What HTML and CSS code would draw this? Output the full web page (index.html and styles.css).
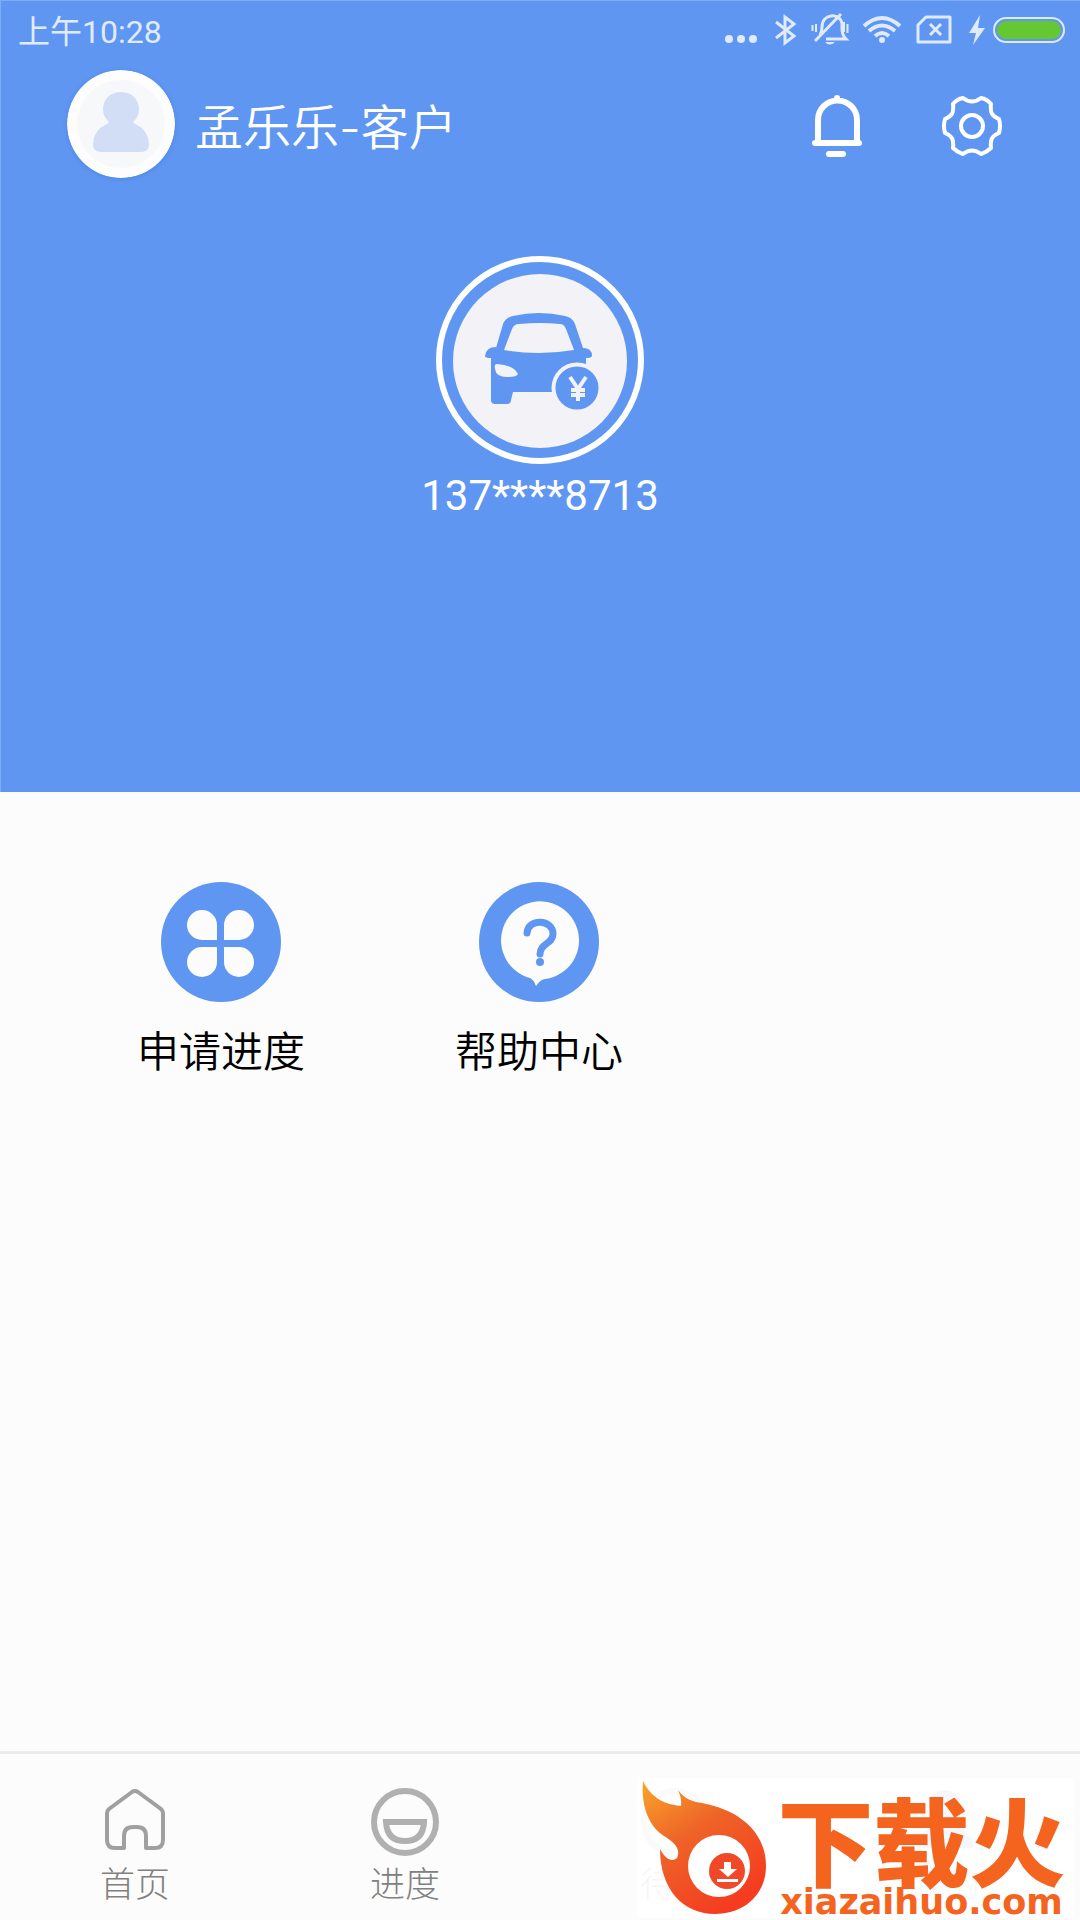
FILE: index.html
```html
<!DOCTYPE html>
<html lang="zh-CN">
<head>
<meta charset="utf-8">
<meta name="viewport" content="width=device-width, initial-scale=1">
<title>我的</title>
<link rel="stylesheet" href="styles.css">
</head>
<body>
<header class="hero">
  <div class="status">
    <span class="status-time">上午10:28</span>
    <svg class="status-icons" viewBox="0 0 350 40" width="350" height="40" aria-hidden="true">
      <g fill="#dfeafc">
        <circle cx="9" cy="29" r="4"/><circle cx="21" cy="29" r="4"/><circle cx="33" cy="29" r="4"/>
        <path d="M260 5 249 23h7l-3 12 12-17h-7l2-13z"/>
        <circle cx="162" cy="30" r="3"/>
        <path d="M105 32h10q-5 5-10 0z"/>
      </g>
      <g fill="none" stroke="#dfeafc" stroke-width="3">
        <path d="M56 12 74 26 65 33V7l9 7-18 14"/>
        <path d="M100 25q2-3 2-8c0-13 17-15 20-4v6q0 6 4 10h-20"/>
        <path d="M95 31 121 4"/>
        <path d="M96 14v8M124 12v10M127.500 14v9M92.500 15v6" stroke-width="2"/>
        <path d="M144 16q18-16 36 0M149 21q13-11 26 0M155 26q7-6 14 0" stroke-width="4"/>
        <path d="M206 7h24v25h-32V15z" stroke-linejoin="round"/>
        <path d="M210 14l11 11M221 14l-11 11"/>
        <rect x="274" y="8" width="70" height="24" rx="12" stroke-width="2"/>
      </g>
      <rect x="277" y="11" width="64" height="18" rx="9" fill="#65c832"/>
    </svg>
  </div>
  <div class="profile">
    <svg class="avatar" viewBox="0 0 108 108" width="108" height="108" aria-hidden="true">
      <circle cx="54" cy="54" r="54" fill="#fdfdfe"/>
      <circle cx="54" cy="54" r="44" fill="#f7f8f9"/>
      <path d="M54 22a17 17 0 0 1 12 30q1 2 4 3 11 5 12 19 0 8-8 8H34q-8 0-8-8 1-14 12-19 3-1 4-3A17 17 0 0 1 54 22z" fill="#d2def5"/>
    </svg>
    <h1 class="name">孟乐乐-客户</h1>
    <button class="icon-button" type="button" aria-label="消息">
      <svg viewBox="0 0 60 62" width="60" height="62" fill="none" stroke="#fff" stroke-width="6" stroke-linecap="round">
        <path d="M12 46V25a19 19 0 0 1 39 0v21M9 48h44M31 5V3M23 59h14"/>
      </svg>
    </button>
    <button class="icon-button" type="button" aria-label="设置">
      <svg viewBox="0 0 60 62" width="60" height="62" fill="none" stroke="#fff" stroke-width="4" stroke-linejoin="round">
        <path d="M21 3q9 7 18 0 6 1 10 6c-1 9 1 12 8 15q2 7 0 14c-7 3-9 6-8 15q-4 4-10 6-9-7-18 0-6-2-10-6c1-9-1-12-8-15q-2-7 0-14c7-3 9-6 8-15q4-5 10-6z"/>
        <circle cx="30" cy="31" r="11"/>
      </svg>
    </button>
  </div>
  <div class="account">
    <svg viewBox="0 0 208 208" width="208" height="208" aria-hidden="true">
      <circle cx="104" cy="104" r="101" fill="none" stroke="#fff" stroke-width="6"/>
      <circle cx="104" cy="105" r="87" fill="#f3f2f7"/>
      <g fill="#5f96f2">
        <path fill-rule="evenodd" d="M60 92 67 68q3-7 10-8 26-6 52 0 7 1 10 8l8 24q9 0 9 8-1 2-6 2v31q0 3-4 3H77l-2 8q0 4-4 4H59q-4 0-4-4v-42q-6 0-6-2 1-9 11-9zM68 94q35 6 70 0l-8-21q-2-5-6-5-20-2-41 0-5 0-7 5zM61 108q-3 0-2 5 1 8 12 8 10 0 11-3-4-9-21-10z"/>
        <circle cx="141" cy="132" r="23.500" stroke="#f3f2f7" stroke-width="4"/>
      </g>
      <path d="M134 121l8 12 8-12M142 133v12M135 134h14M135 139h14" fill="none" stroke="#f3f2f7" stroke-width="4"/>
    </svg>
    <p class="phone">137****8713</p>
  </div>
</header>
<main class="content">
  <ul class="shortcuts">
    <li>
      <a class="shortcut" href="#progress">
        <svg viewBox="0 0 120 120" width="120" height="120" aria-hidden="true">
          <circle cx="60" cy="60" r="60" fill="#5f96f2"/>
          <path fill="#fcfcfc" d="M56 58H41a15 15 0 1 1 15-15zM63 58h15a15 15 0 1 0-15-15zM56 65H41a15 15 0 1 0 15 15zM63 65h15a15 15 0 1 1-15 15z"/>
        </svg>
        <span>申请进度</span>
      </a>
    </li>
    <li>
      <a class="shortcut" href="#help">
        <svg viewBox="0 0 120 120" width="120" height="120" aria-hidden="true">
          <circle cx="60" cy="60" r="60" fill="#5f96f2"/>
          <path fill="#fcfcfc" d="M66 97q-4 0-9 7-2-6-6-8a39 39 0 1 1 15 1z"/>
          <path d="M48 51c1-15 26-14 26 1 0 10-13 9-13 20" fill="none" stroke="#5f96f2" stroke-width="7" stroke-linecap="round"/>
          <circle cx="61" cy="80" r="4" fill="#5f96f2"/>
        </svg>
        <span>帮助中心</span>
      </a>
    </li>
  </ul>
</main>
<footer class="bottom">
  <nav class="tabs">
    <a class="tab" href="#home">
      <svg viewBox="0 0 72 72" width="72" height="72" fill="none" stroke="#a0a0a0" stroke-width="4" stroke-linejoin="round" aria-hidden="true">
        <path d="M33 6q3-2 6 0l23 17q2 2 2 4v27q0 8-8 8H47V50q0-9-9-9h-4q-9 0-9 9v12H16q-8 0-8-8V27q0-2 2-4z"/>
      </svg>
      <span>首页</span>
    </a>
    <a class="tab" href="#schedule">
      <svg viewBox="0 0 72 72" width="72" height="72" fill="none" stroke="#b0b0b0" stroke-width="6" aria-hidden="true">
        <circle cx="36" cy="36" r="31"/>
        <path d="M17 36h38q-1 19-19 19T17 36z"/>
      </svg>
      <span>进度</span>
    </a>
    <a class="tab" href="#repay">
      <svg viewBox="0 0 72 72" width="72" height="72" fill="none" stroke="#b0b0b0" stroke-width="6" aria-hidden="true">
        <circle cx="36" cy="36" r="31"/>
        <path d="M28 24v24M36 24v24M44 24v24"/>
      </svg>
      <span>待还</span>
    </a>
    <a class="tab tab-active" href="#mine">
      <svg viewBox="0 0 72 72" width="72" height="72" fill="#5f96f2" aria-hidden="true">
        <circle cx="36" cy="20" r="16"/>
        <path d="M8 62q0-22 28-22t28 22z"/>
      </svg>
      <span>我的</span>
    </a>
  </nav>
  <div class="brand">
    <svg class="brand-logo" viewBox="0 0 126 138" width="126" height="138" aria-hidden="true">
      <defs>
        <linearGradient id="flame" x1="0" y1="0" x2="0.600" y2="1">
          <stop offset="0" stop-color="#faa52b"/><stop offset="0.450" stop-color="#ee6428"/><stop offset="1" stop-color="#f53c20"/>
        </linearGradient>
      </defs>
      <path fill="url(#flame)" d="M6 3C12 15 22 26 44 28Q45 21 41 12 47 21 59 24C96 29 129 50 129 88 129 116 108 136 78 136 45 136 23 110 23 71 29 82 35 84 40 80 44 71 38 65 27 58 10 47 4 25 6 3z"/>
      <circle cx="82" cy="88" r="31" fill="#fff"/>
      <circle cx="90" cy="93" r="18" fill="#f2482a"/>
      <path fill="#fff" d="M87 84h7v7h6l-9 8-9-8h5zM80 101h21v3H80z"/>
    </svg>
    <div class="brand-text">
      <span class="brand-name">下载火</span>
      <span class="brand-url">xiazaihuo.com</span>
    </div>
  </div>
</footer>
</body>
</html>
```

FILE: styles.css
```css
* { box-sizing: border-box; }
body {
  margin: 0;
  min-height: 100vh;
  display: flex;
  flex-direction: column;
  background: #fcfcfc;
  color: #000;
  font-family: Roboto, "Noto Sans CJK SC", sans-serif;
}
svg { display: block; flex: none; }
a { color: inherit; text-decoration: none; }
.hero {
  padding-bottom: 266px;
  background: #5f96f2;
  color: #fff;
  box-shadow: inset 1px 1px #7dadf8;
}
.status {
  display: flex;
  align-items: center;
  justify-content: space-between;
  height: 60px;
  padding: 0 10px 0 18px;
}
.status-time {
  padding-top: 3px;
  font: 400 32px/60px Roboto, "Noto Sans CJK SC", sans-serif;
  color: #e0ebfd;
}
.profile {
  display: flex;
  align-items: center;
  gap: 20px;
  padding: 10px 78px 0 67px;
}
.avatar { border-radius: 50%; box-shadow: 0 1px 4px #4f86e0; }
.name {
  flex: 1;
  margin: 0;
  padding-top: 8px;
  font: 350 48px/72px Inter, "Noto Sans CJK SC", sans-serif;
}
.icon-button {
  margin: 0 0 0 56px;
  padding: 4px 0 0;
  border: 0;
  background: none;
}
.account {
  display: flex;
  flex-direction: column;
  align-items: center;
  margin-top: 78px;
}
.phone { margin: 0; font-size: 42px; line-height: 64px; height: 62px; }
.content { flex: 1; padding: 90px 64px 90px 62px; }
.shortcuts {
  display: grid;
  grid-template-columns: repeat(3, 1fr);
  margin: 0;
  padding: 0;
  list-style: none;
}
.shortcut {
  display: flex;
  flex-direction: column;
  align-items: center;
  gap: 17px;
  font: 350 42px/60px "Noto Sans CJK SC", sans-serif;
}
.bottom { position: relative; }
.tabs {
  display: grid;
  grid-template-columns: repeat(4, 1fr);
  padding: 32px 0 14px;
  border-top: 3px solid #ebebeb;
}
.tab {
  display: flex;
  flex-direction: column;
  align-items: center;
  font: 300 35px/48px "Noto Sans CJK SC", sans-serif;
  color: #808080;
}
.tab-active { color: #5f96f2; }
.brand {
  position: absolute;
  right: 6px;
  bottom: 2px;
  display: flex;
  width: 437px;
  height: 140px;
  background: rgba(255, 255, 255, 0.93);
}
.brand-logo { overflow: visible; }
.brand-text {
  display: flex;
  flex-direction: column;
  align-items: center;
  flex: 1;
  padding-left: 6px;
  color: #f5641e;
}
.brand-name {
  margin-top: 14px;
  font: 900 96px/92px "Noto Sans CJK SC", sans-serif;
}
.brand-url { font: 700 35px/36px "DejaVu Sans", sans-serif; }
```
